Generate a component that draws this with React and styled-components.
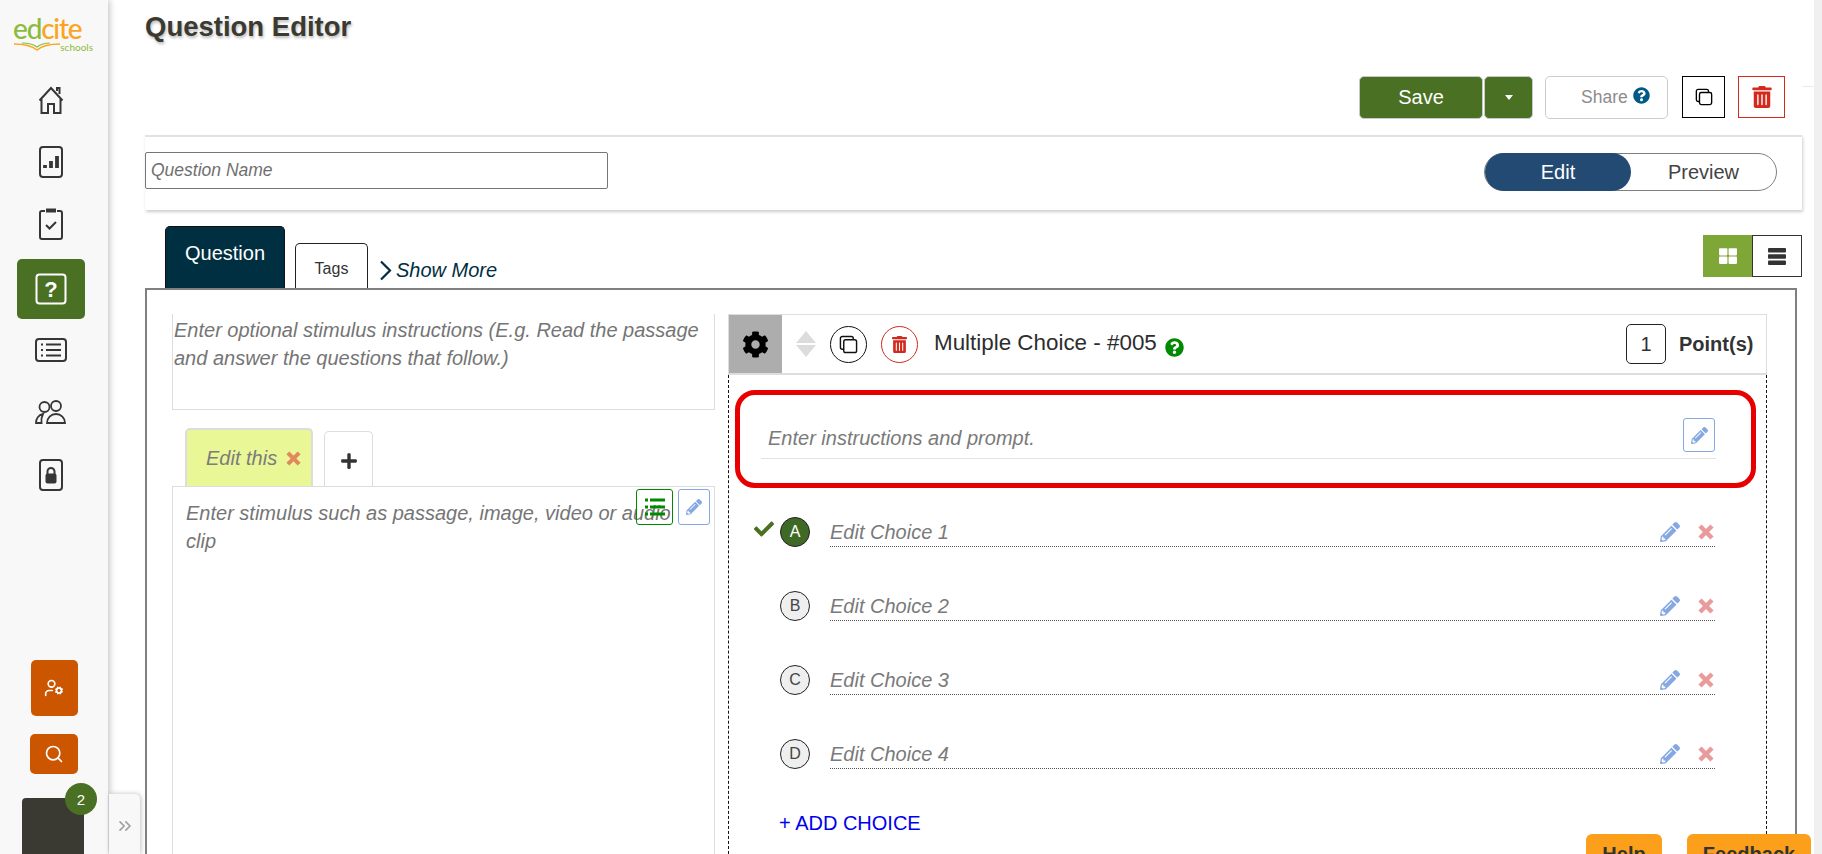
import React from "react";
import styled, { createGlobalStyle } from "styled-components";
import { FaCog, FaPencilAlt, FaCheck, FaPlus, FaTrashAlt, FaQuestionCircle, FaThLarge } from "react-icons/fa";
import { LuUserCog, LuSearch, LuChevronsRight } from "react-icons/lu";

const Global = createGlobalStyle`
  html, body { margin: 0; padding: 0; height: 100%; overflow: hidden; background: #fff; }
  body { font-family: "Liberation Sans", Arial, sans-serif; color: #333; }
  * { box-sizing: border-box; }
`;

const Page = styled.div`
  display: flex;
  width: 1822px;
  height: 854px;
  overflow: hidden;
  position: relative;
`;

const Sidebar = styled.aside`
  width: 108px;
  flex: none;
  padding-right: 6px;
  background: #f8f8f8;
  box-shadow: 2px 0 6px rgba(0, 0, 0, 0.22);
  display: flex;
  flex-direction: column;
  align-items: center;
  position: relative;
  z-index: 2;
`;

const Logo = styled.div`
  width: 80px;
  height: 53px;
  margin-top: 16px;
  margin-left: 4px;
  position: relative;
  font-family: "Lato", sans-serif;
`;

const LogoWord = styled.div`
  font-size: 28px;
  line-height: 24px;
  font-weight: 500;
  letter-spacing: -1.2px;
  color: #8cbb3c;
  span { color: #fba51f; }
`;

const LogoSub = styled.div`
  position: absolute;
  right: 0;
  top: 26px;
  font-size: 10px;
  line-height: 1;
  color: #8cbb3c;
`;

const LogoBook = styled.svg`
  position: absolute;
  left: 0;
  top: 26px;
`;

const NavList = styled.nav`
  display: flex;
  flex-direction: column;
  align-items: center;
`;

const NavItem = styled.div`
  width: 68px;
  height: ${(p) => p.$h}px;
  margin-top: ${(p) => (p.$active ? 4 : 0)}px;
  display: flex;
  align-items: center;
  justify-content: center;
  border-radius: 5px;
  color: ${(p) => (p.$active ? "#fff" : "#363636")};
  background: ${(p) => (p.$active ? "#4a7023" : "transparent")};
`;

const SideBottom = styled.div`
  margin-top: auto;
  display: flex;
  flex-direction: column;
  align-items: center;
`;

const OrangeBtn = styled.div`
  width: ${(p) => p.$w}px;
  height: ${(p) => p.$h}px;
  margin-bottom: 18px;
  margin-left: 6px;
  background: #cc5500;
  border-radius: 5px;
  color: #fff;
  display: flex;
  align-items: center;
  justify-content: center;
`;

const Avatar = styled.div`
  width: 62px;
  height: 56px;
  margin-left: 4px;
  margin-top: 6px;
  background: #3a3a32;
  border-radius: 4px 4px 0 0;
  position: relative;
`;

const Badge = styled.div`
  position: absolute;
  right: -13px;
  top: -15px;
  width: 32px;
  height: 32px;
  border-radius: 50%;
  background: #4a7023;
  color: #fff;
  font-size: 15px;
  display: flex;
  align-items: center;
  justify-content: center;
`;

const ExpandTab = styled.div`
  position: absolute;
  left: 109px;
  top: 794px;
  width: 31px;
  height: 60px;
  background: #f8f8f8;
  border-radius: 0 5px 0 0;
  box-shadow: 1px 0 5px rgba(0, 0, 0, 0.25);
  color: #a0a0a0;
  display: flex;
  align-items: center;
  justify-content: center;
  padding-top: 4px;
  z-index: 3;
`;

const Main = styled.main`
  flex: 1;
  min-width: 0;
  padding-left: 37px;
  display: flex;
  flex-direction: column;
`;

const Title = styled.h1`
  margin: 0;
  height: 76px;
  padding-top: 12px;
  font-size: 27.5px;
  line-height: 30px;
  font-weight: 700;
  color: #3a3a32;
  text-shadow: 1px 2px 3px rgba(0, 0, 0, 0.28);
`;

const Toolbar = styled.div`
  height: 43px;
  display: flex;
  align-items: flex-start;
  justify-content: flex-end;
  padding-right: 29px;
  position: relative;
  &::after {
    content: "";
    position: absolute;
    right: 0;
    top: 10px;
    width: 12px;
    height: 1px;
    background: #eaeaea;
  }
`;

const SaveBtn = styled.div`
  width: ${(p) => p.$w}px;
  height: 43px;
  margin-right: ${(p) => p.$mr}px;
  background: #4a7023;
  border: 1px solid #c9c9c9;
  border-radius: 5px;
  color: #fff;
  font-size: 20px;
  display: flex;
  align-items: center;
  justify-content: center;
`;

const Caret = styled.span`
  width: 0;
  height: 0;
  border-left: 4.5px solid transparent;
  border-right: 4.5px solid transparent;
  border-top: 5px solid #fff;
`;

const ShareBtn = styled.div`
  width: 123px;
  height: 43px;
  margin-right: 14px;
  border: 1px solid #ccc;
  border-radius: 5px;
  color: #8c8c8c;
  font-size: 17.5px;
  display: flex;
  align-items: center;
  padding-left: 35px;
  gap: 5px;
  svg { color: #005a87; margin-top: -5px; }
`;

const SquareBtn = styled.div`
  width: ${(p) => p.$w}px;
  height: 42px;
  margin-right: ${(p) => p.$mr || 0}px;
  border: 1px solid ${(p) => p.$c};
  color: ${(p) => p.$c};
  display: flex;
  align-items: center;
  justify-content: center;
`;

const NamePanel = styled.section`
  height: 75px;
  margin-top: 16px;
  border-top: 2px solid #e2e2e2;
  box-shadow: 1px 2px 3px rgba(0, 0, 0, 0.2);
  display: flex;
  align-items: center;
  justify-content: space-between;
  padding: 0 25px 3px 0;
  margin-right: 12px;
`;

const NameInput = styled.div`
  width: 463px;
  height: 37px;
  margin-top: -4px;
  border: 1px solid #767676;
  border-radius: 2px;
  padding-left: 5px;
  font-size: 17.5px;
  font-style: italic;
  color: #6f6f6f;
  display: flex;
  align-items: center;
`;

const Toggle = styled.div`
  width: 293px;
  height: 38px;
  border: 1px solid #808080;
  border-radius: 19px;
  display: flex;
  font-size: 20px;
`;

const ToggleItem = styled.div`
  flex: ${(p) => (p.$on ? "0 0 146px" : "1")};
  margin: -1px 0;
  border-radius: 19px;
  background: ${(p) => (p.$on ? "#234a72" : "transparent")};
  color: ${(p) => (p.$on ? "#fff" : "#444")};
  display: flex;
  align-items: center;
  justify-content: center;
`;

const TabBar = styled.div`
  height: 78px;
  display: flex;
  align-items: flex-end;
  padding-left: 20px;
  margin-right: 12px;
  position: relative;
`;

const QuestionTab = styled.div`
  width: 120px;
  height: 62px;
  background: #002f42;
  border: 1px solid #111;
  border-bottom: 0;
  border-radius: 5px 5px 0 0;
  color: #fff;
  font-size: 20px;
  padding-top: 15px;
  text-align: center;
`;

const TagsTab = styled.div`
  width: 73px;
  height: 45px;
  margin-left: 10px;
  border: 1px solid #222;
  border-bottom: 0;
  border-radius: 5px 5px 0 0;
  font-size: 16px;
  padding-top: 16px;
  text-align: center;
`;

const ShowMore = styled.div`
  margin-left: 11px;
  padding-bottom: 6px;
  display: flex;
  align-items: center;
  gap: 4px;
  font-size: 20px;
  font-style: italic;
  color: #002f42;
`;

const ViewSwitch = styled.div`
  position: absolute;
  right: 0;
  top: 25px;
  display: flex;
`;

const ViewBtn = styled.div`
  width: ${(p) => p.$w}px;
  height: 42px;
  background: ${(p) => (p.$on ? "#7ea737" : "#fff")};
  color: ${(p) => (p.$on ? "#fff" : "#333")};
  border: ${(p) => (p.$on ? "0" : "1px solid #333")};
  display: flex;
  align-items: center;
  justify-content: center;
`;

const Workspace = styled.section`
  flex: 1;
  margin-right: 17px;
  border: 2px solid #808080;
  border-bottom: 0;
  padding: 24px 28px 0 25px;
  display: flex;
  gap: 13px;
  min-height: 0;
`;

const LeftCol = styled.div`
  width: 543px;
  flex: none;
  display: flex;
  flex-direction: column;
`;

const Instructions = styled.div`
  height: 96px;
  border: 1px solid #ddd;
  border-top: 0;
  padding: 2px 1px 0 1px;
  font-size: 20px;
  line-height: 28px;
  font-style: italic;
  color: #757575;
`;

const StimTabs = styled.div`
  height: 76px;
  display: flex;
  align-items: flex-end;
  padding-left: 13px;
  gap: 11px;
`;

const EditTab = styled.div`
  width: 128px;
  height: 58px;
  background: #e9f796;
  border: 2px solid #ddd;
  border-bottom: 0;
  border-radius: 5px 5px 0 0;
  padding: 0 0 0 19px;
  display: flex;
  align-items: center;
  gap: 9px;
  font-size: 20px;
  font-style: italic;
  color: #7c7c7c;
`;

const AddTab = styled.div`
  width: 49px;
  height: 55px;
  border: 1px solid #ddd;
  border-bottom: 0;
  border-radius: 5px 5px 0 0;
  color: #333;
  display: flex;
  align-items: center;
  justify-content: center;
  padding-top: 3px;
`;

const StimBody = styled.div`
  flex: 1;
  border: 1px solid #ddd;
  border-bottom: 0;
  padding: 12px 13px;
  font-size: 20px;
  line-height: 28px;
  font-style: italic;
  color: #757575;
  position: relative;
`;

const StimTools = styled.div`
  position: absolute;
  right: 4px;
  top: 2px;
  display: flex;
  gap: 5px;
`;

const StimTool = styled.div`
  width: ${(p) => p.$w}px;
  height: 36px;
  border: 1px solid ${(p) => p.$c};
  border-radius: 3px;
  color: ${(p) => p.$c};
  display: flex;
  align-items: center;
  justify-content: center;
`;

const RightCol = styled.div`
  flex: 1;
  min-width: 0;
  display: flex;
  flex-direction: column;
`;

const QuestionHeader = styled.div`
  height: 61px;
  flex: none;
  border: 1px solid #ddd;
  border-width: 1px 1px 2px 1px;
  display: flex;
  align-items: center;
`;

const GearBox = styled.div`
  width: 53px;
  height: 100%;
  background: #adadad;
  color: #000;
  display: flex;
  align-items: center;
  justify-content: center;
`;

const SortArrows = styled.svg`
  margin: 0 14px;
`;

const CircleBtn = styled.div`
  width: 37px;
  height: 37px;
  margin-right: 14px;
  border-radius: 50%;
  border: 1px solid ${(p) => p.$c};
  color: ${(p) => p.$c};
  display: flex;
  align-items: center;
  justify-content: center;
`;

const QuestionTitle = styled.div`
  font-size: 22.4px;
  margin-left: 2px;
  margin-top: -2px;
  color: #2d2d2d;
`;

const HelpDot = styled.span`
  color: #008a00;
  margin: 7px 0 0 8px;
  display: flex;
`;

const PointBox = styled.div`
  margin-left: auto;
  width: 40px;
  height: 40px;
  border: 1px solid #222;
  border-radius: 5px;
  font-size: 20px;
  display: flex;
  align-items: center;
  justify-content: center;
`;

const PointLabel = styled.div`
  width: 100px;
  padding-left: 13px;
  font-size: 20px;
  font-weight: 700;
`;

const Dotted = styled.div`
  flex: 1;
  border-left: 1px dashed #111;
  border-right: 1px dashed #111;
  padding-top: 15px;
`;

const PromptBox = styled.div`
  height: 98px;
  margin: 0 10px 0 6px;
  border: 5px solid #e80000;
  border-radius: 20px;
  padding: 23px 35px 0 21px;
`;

const PromptRow = styled.div`
  height: 41px;
  border-bottom: 1px solid #e3e3e3;
  display: flex;
  align-items: flex-end;
  padding: 0 0 8px 7px;
  font-size: 20px;
  font-style: italic;
  color: #7a7a7a;
  position: relative;
`;

const PromptEdit = styled.div`
  position: absolute;
  right: 1px;
  top: 0;
  width: 32px;
  height: 34px;
  border: 1px solid #86a8e2;
  border-radius: 3px;
  color: #86a8e2;
  display: flex;
  align-items: center;
  justify-content: center;
`;

const ChoiceRow = styled.div`
  height: 59px;
  margin-bottom: 15px;
  display: flex;
  align-items: flex-end;
  padding: 0 51px 0 26px;
`;

const CheckSlot = styled.div`
  width: 25px;
  height: 30px;
  flex: none;
  color: #4a7023;
  padding-top: 2px;
  margin-left: -1px;
  margin-right: 1px;
`;

const Letter = styled.div`
  width: 30px;
  height: 30px;
  flex: none;
  margin-right: 20px;
  border-radius: 50%;
  border: 1px solid #222;
  background: ${(p) => (p.$on ? "#3f6a25" : "#efefef")};
  color: ${(p) => (p.$on ? "#fff" : "#444")};
  font-size: 16px;
  display: flex;
  align-items: center;
  justify-content: center;
`;

const ChoiceBody = styled.div`
  flex: 1;
  height: 31px;
  padding: 2px 1px 0 0;
  border-bottom: 1px dotted #555;
  display: flex;
  align-items: center;
  font-size: 20px;
  font-style: italic;
  color: #7a7a7a;
`;

const ChoiceIcon = styled.span`
  display: flex;
  margin-left: ${(p) => p.$ml};
  color: ${(p) => p.$c};
`;

const AddChoice = styled.div`
  margin: 43px 0 0 50px;
  font-size: 20px;
  color: #0000ee;
`;

const FloatBtn = styled.div`
  position: absolute;
  bottom: 0;
  left: ${(p) => p.$x}px;
  width: ${(p) => p.$w}px;
  height: 20px;
  background: #fca01c;
  border-radius: 6px 6px 0 0;
  padding-top: 9px;
  overflow: hidden;
  font-size: 20px;
  font-weight: 700;
  line-height: 22px;
  text-align: center;
  color: #333;
  z-index: 4;
`;

const Scrollbar = styled.div`
  width: 8px;
  flex: none;
  background: #f0f0f0;
`;

const HomeIcon = () => (
  <svg width="26" height="28" viewBox="0 0 26 28" fill="none" stroke="currentColor" strokeWidth="2">
    <path d="M1.500 14.500 13 2l11.500 12.500M3.500 12v15h6.500v-9h6v9h6.500V12M19 5V2h2.500v6" />
  </svg>
);
const ChartIcon = () => (
  <svg width="24" height="32" viewBox="0 0 24 32" fill="none" stroke="currentColor" strokeWidth="2">
    <rect x="1" y="1" width="22" height="30" rx="3" />
    <path d="M6 22v-3M12 22v-7M18 22V10" strokeWidth="3.800" />
  </svg>
);
const ClipIcon = () => (
  <svg width="24" height="32" viewBox="0 0 24 32" fill="none" stroke="currentColor" strokeWidth="2">
    <path d="M6 3H3a2 2 0 0 0-2 2v24a2 2 0 0 0 2 2h18a2 2 0 0 0 2-2V5a2 2 0 0 0-2-2h-3" />
    <rect x="7" y="0.500" width="10" height="4" fill="currentColor" stroke="none" />
    <path d="m7 17 3.500 3.500L17 14" />
  </svg>
);
const QuestionIcon = () => (
  <svg width="32" height="32" viewBox="0 0 32 32" fill="none">
    <rect x="1.500" y="1.500" width="29" height="29" rx="3" stroke="currentColor" strokeWidth="2" />
    <text x="16" y="24" textAnchor="middle" fontSize="22" fontWeight="700" fontFamily="Liberation Sans" fill="currentColor">?</text>
  </svg>
);
const ListIcon = () => (
  <svg width="32" height="24" viewBox="0 0 32 24" fill="none" stroke="currentColor" strokeWidth="2">
    <rect x="1" y="1" width="30" height="22" rx="3" />
    <path d="M11 6.500h15M11 12h15M11 17.500h15" />
    <path d="M6 6.500h2M6 12h2M6 17.500h2" />
  </svg>
);
const PeopleIcon = () => (
  <svg width="32" height="24" viewBox="0 0 32 24" fill="none" stroke="currentColor" strokeWidth="1.800">
    <circle cx="9.500" cy="7" r="5" />
    <circle cx="21" cy="6" r="5" />
    <path d="M1 23c0-4 2.500-8 7-9-1.500 3-2 6-1.500 9zM12 23c0-5 4-9 9-9s9 4 9 9z" />
  </svg>
);
const LockIcon = () => (
  <svg width="24" height="32" viewBox="0 0 24 32" fill="none" stroke="currentColor" strokeWidth="2">
    <rect x="1" y="1" width="22" height="30" rx="3" />
    <path d="M8.500 15v-2.500a3.500 3.500 0 0 1 7 0V15" />
    <rect x="6.500" y="14.500" width="11" height="10" rx="2" fill="currentColor" stroke="none" />
  </svg>
);
const CopyIcon = ({ size = 20 }) => (
  <svg width={size} height={size} viewBox="0 0 20 20" fill="none" stroke="currentColor" strokeWidth="1.500">
    <path d="M5 15H3.500A2 2 0 0 1 1.500 13V3.500a2 2 0 0 1 2-2H13a2 2 0 0 1 2 2V5" />
    <rect x="5" y="5" width="13.500" height="13.500" rx="2" />
  </svg>
);
const BarsIcon = () => (
  <svg width="18" height="17" viewBox="0 0 18 17" fill="currentColor">
    <rect width="18" height="4.500" rx="1" />
    <rect y="6.200" width="18" height="4.500" rx="1" />
    <rect y="12.400" width="18" height="4.500" rx="1" />
  </svg>
);
const RowsIcon = () => (
  <svg width="20" height="18" viewBox="0 0 20 18" fill="none" stroke="currentColor" strokeWidth="3">
    <path d="M5 2h15M5 9h15M5 16h15" />
    <path d="M0 2h3M0 9h3M0 16h3" />
  </svg>
);
const Chevron = () => (
  <svg width="13" height="21" viewBox="0 0 13 21" fill="none" stroke="currentColor" strokeWidth="2.200">
    <path d="m2 1.500 9 9-9 9" />
  </svg>
);
const CrossIcon = ({ size, color }) => (
  <svg width={size} height={size} viewBox="0 0 16 16" fill="none" stroke={color} strokeWidth="4.500">
    <path d="m2 2 12 12M14 2 2 14" />
  </svg>
);

const choices = [
  { letter: "A", label: "Edit Choice 1", correct: true },
  { letter: "B", label: "Edit Choice 2" },
  { letter: "C", label: "Edit Choice 3" },
  { letter: "D", label: "Edit Choice 4" },
];

const nav = [
  { icon: <HomeIcon />, h: 62 },
  { icon: <ChartIcon />, h: 62 },
  { icon: <ClipIcon />, h: 62 },
  { icon: <QuestionIcon />, h: 60, active: true },
  { icon: <ListIcon />, h: 62 },
  { icon: <PeopleIcon />, h: 62 },
  { icon: <LockIcon />, h: 64 },
];

const App = () => {
  return (
    <Page>
      <Global />
      <Sidebar>
        <Logo>
          <LogoWord>
            ed<span>cite</span>
          </LogoWord>
          <LogoBook width="48" height="9" viewBox="0 0 48 9" fill="none">
            <path d="M1 2c9 0 17 1 23 6C30 3 38 2 47 2" stroke="#fba51f" strokeWidth="1.500" />
            <path d="M9 1c6 0 11 1 15 4 4-3 8-4 13-4" stroke="#8cbb3c" strokeWidth="1.200" />
          </LogoBook>
          <LogoSub>schools</LogoSub>
        </Logo>
        <NavList>
          {nav.map((item, i) => (
            <NavItem key={i} $h={item.h} $active={item.active}>
              {item.icon}
            </NavItem>
          ))}
        </NavList>
        <SideBottom>
          <OrangeBtn $w={47} $h={56}>
            <LuUserCog size={20} />
          </OrangeBtn>
          <OrangeBtn $w={48} $h={40}>
            <LuSearch size={20} />
          </OrangeBtn>
          <Avatar>
            <Badge>2</Badge>
          </Avatar>
        </SideBottom>
      </Sidebar>
      <ExpandTab>
        <LuChevronsRight size={20} />
      </ExpandTab>

      <Main>
        <Title>Question Editor</Title>
        <Toolbar>
          <SaveBtn $w={124} $mr={1}>Save</SaveBtn>
          <SaveBtn $w={49} $mr={12}>
            <Caret />
          </SaveBtn>
          <ShareBtn>
            Share <FaQuestionCircle size={17} />
          </ShareBtn>
          <SquareBtn $w={43} $mr={13} $c="#000">
            <CopyIcon size={18} />
          </SquareBtn>
          <SquareBtn $w={47} $c="#d42a1e">
            <FaTrashAlt size={22} />
          </SquareBtn>
        </Toolbar>

        <NamePanel>
          <NameInput>Question Name</NameInput>
          <Toggle>
            <ToggleItem $on>Edit</ToggleItem>
            <ToggleItem>Preview</ToggleItem>
          </Toggle>
        </NamePanel>

        <TabBar>
          <QuestionTab>Question</QuestionTab>
          <TagsTab>Tags</TagsTab>
          <ShowMore>
            <Chevron />
            Show More
          </ShowMore>
          <ViewSwitch>
            <ViewBtn $w={49} $on>
              <FaThLarge size={18} />
            </ViewBtn>
            <ViewBtn $w={50}>
              <BarsIcon />
            </ViewBtn>
          </ViewSwitch>
        </TabBar>

        <Workspace>
          <LeftCol>
            <Instructions>
              Enter optional stimulus instructions (E.g. Read the passage and answer the questions that follow.)
            </Instructions>
            <StimTabs>
              <EditTab>
                Edit this <CrossIcon size={15} color="#e08a5c" />
              </EditTab>
              <AddTab>
                <FaPlus size={18} />
              </AddTab>
            </StimTabs>
            <StimBody>
              Enter stimulus such as passage, image, video or audio clip
              <StimTools>
                <StimTool $w={37} $c="#008a00">
                  <RowsIcon />
                </StimTool>
                <StimTool $w={32} $c="#86a8e2">
                  <FaPencilAlt size={16} />
                </StimTool>
              </StimTools>
            </StimBody>
          </LeftCol>

          <RightCol>
            <QuestionHeader>
              <GearBox>
                <FaCog size={27} />
              </GearBox>
              <SortArrows width="20" height="26" viewBox="0 0 20 26" fill="#dcdcdc">
                <path d="M10 0 20 12H0zM0 14h20L10 26z" />
              </SortArrows>
              <CircleBtn $c="#111">
                <CopyIcon size={19} />
              </CircleBtn>
              <CircleBtn $c="#d42a1e">
                <FaTrashAlt size={17} />
              </CircleBtn>
              <QuestionTitle>Multiple Choice - #005</QuestionTitle>
              <HelpDot>
                <FaQuestionCircle size={19} />
              </HelpDot>
              <PointBox>1</PointBox>
              <PointLabel>Point(s)</PointLabel>
            </QuestionHeader>
            <Dotted>
              <PromptBox>
                <PromptRow>
                  Enter instructions and prompt.
                  <PromptEdit>
                    <FaPencilAlt size={17} />
                  </PromptEdit>
                </PromptRow>
              </PromptBox>
              {choices.map((c) => (
                <ChoiceRow key={c.letter}>
                  <CheckSlot>{c.correct && <FaCheck size={20} />}</CheckSlot>
                  <Letter $on={c.correct}>{c.letter}</Letter>
                  <ChoiceBody>
                    {c.label}
                    <ChoiceIcon $ml="auto" $c="#86a8e2">
                      <FaPencilAlt size={20} />
                    </ChoiceIcon>
                    <ChoiceIcon $ml="18px" $c="#ea9a9a">
                      <CrossIcon size={16} color="#ea9a9a" />
                    </ChoiceIcon>
                  </ChoiceBody>
                </ChoiceRow>
              ))}
              <AddChoice>+ ADD CHOICE</AddChoice>
            </Dotted>
          </RightCol>
        </Workspace>
      </Main>
      <Scrollbar />
      <FloatBtn $x={1586} $w={76}>Help</FloatBtn>
      <FloatBtn $x={1687} $w={124}>Feedback</FloatBtn>
    </Page>
  );
};

export default App;
